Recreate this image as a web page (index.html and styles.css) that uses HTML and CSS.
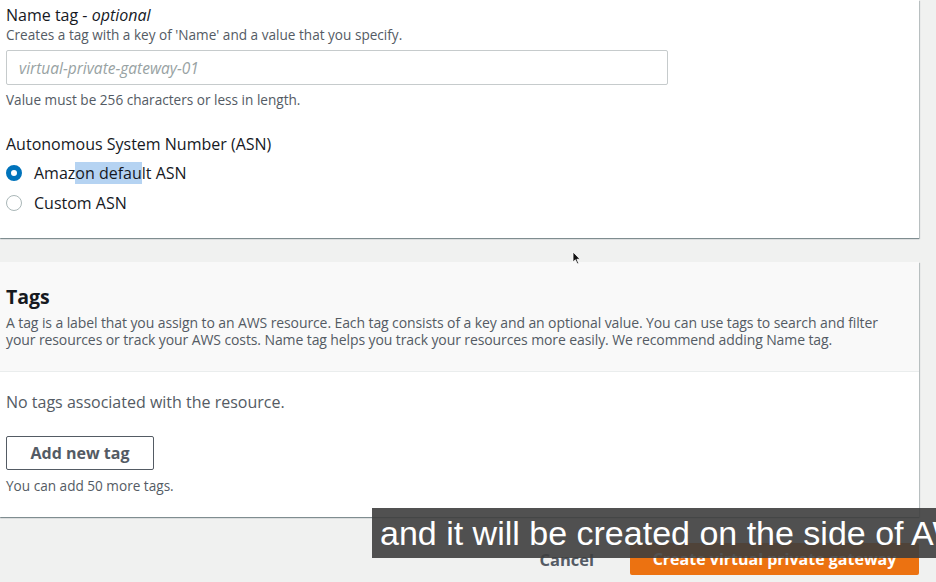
FILE: index.html
```html
<!DOCTYPE html>
<html lang="en">
<head>
<meta charset="utf-8">
<title>Create virtual private gateway</title>
<link rel="stylesheet" href="styles.css">
</head>
<body>
<main class="page">
  <section class="card card-details">
    <div class="field">
      <div class="label">Name tag - <i>optional</i></div>
      <div class="desc">Creates a tag with a key of 'Name' and a value that you specify.</div>
      <input class="text-input" type="text" placeholder="virtual-private-gateway-01">
      <div class="hint">Value must be 256 characters or less in length.</div>
    </div>
    <div class="field field-asn">
      <div class="label">Autonomous System Number (ASN)</div>
      <label class="radio-row">
        <span class="radio checked"></span>
        <span class="radio-text">Amaz<span class="sel">on defau</span>lt ASN</span>
      </label>
      <label class="radio-row">
        <span class="radio"></span>
        <span class="radio-text">Custom ASN</span>
      </label>
    </div>
  </section>

  <section class="card card-tags">
    <header class="tags-header">
      <h2 class="tags-title">Tags</h2>
      <p class="tags-desc">A tag is a label that you assign to an AWS resource. Each tag consists of a key and an optional value. You can use tags to search and filter your resources or track your AWS costs. Name tag helps you track your resources more easily. We recommend adding Name tag.</p>
    </header>
    <div class="tags-body">
      <p class="empty">No tags associated with the resource.</p>
      <button class="btn-normal" type="button">Add new tag</button>
      <div class="hint">You can add 50 more tags.</div>
    </div>
  </section>

  <footer class="actions">
    <button class="btn-link" type="button">Cancel</button>
    <button class="btn-primary" type="button">Create virtual private gateway</button>
  </footer>
</main>

<svg class="cursor" width="9" height="14" viewBox="0 0 9 14">
  <path d="M1 1 L1 11 L3.4 8.8 L5.2 12.8 L6.6 12.2 L4.9 8.3 L8 8.2 Z" fill="#111" stroke="#fff" stroke-width="0.8"/>
</svg>

<div class="subtitle">and it will be created on the side of AWS</div>
</body>
</html>
```

FILE: styles.css
```css
* { box-sizing: border-box; }

html, body {
  margin: 0;
  padding: 0;
}

body {
  width: 936px;
  height: 582px;
  overflow: hidden;
  background: #f0f1f0;
  font-family: "Open Sans", "Noto Sans", Arial, sans-serif;
  color: #16191f;
  position: relative;
}

.page {
  display: flex;
  flex-direction: column;
  padding-right: 17px;
}

.card {
  background: #fff;
  box-shadow: 0 1px 1px 0 rgba(0, 28, 36, .35), 1px 1px 1px 0 rgba(0, 28, 36, .18);
}

.card-details {
  padding: 4px 0 0 6px;
  height: 238px;
}

.label {
  font-size: 16px;
  line-height: 22px;
  color: #16191f;
}

.label i { font-style: italic; }

.desc, .hint {
  font-size: 13.6px;
  line-height: 18px;
  color: #545b64;
}

.text-input {
  display: block;
  margin: 6px 0 6px;
  width: 662px;
  height: 35px;
  border: 1px solid #c6cbcc;
  border-radius: 2px;
  padding: 0 12px;
  font-family: inherit;
  font-size: 15.5px;
  font-style: italic;
  outline: none;
}

.text-input::placeholder {
  color: #98a2a3;
  font-style: italic;
}

.field-asn {
  margin-top: 24px;
}

.field-asn .label { margin-bottom: 3px; }

.radio-row {
  display: flex;
  align-items: center;
  gap: 12px;
  height: 30px;
  font-size: 16px;
}

.radio {
  width: 16px;
  height: 16px;
  border-radius: 50%;
  border: 1.5px solid #aab7b8;
  background: #fff;
  flex: none;
}

.radio.checked {
  border: 5px solid #0073bb;
}

.sel {
  background: #b5d3f2;
}

.card-tags {
  margin-top: 24px;
  display: flex;
  flex-direction: column;
}

.tags-header {
  background: #f9f9f9;
  padding: 22px 0 0 6px;
  height: 110px;
  border-bottom: 1px solid #eaeded;
}

.tags-title {
  margin: 0;
  font-size: 19.5px;
  line-height: 26px;
  font-weight: 700;
  color: #16191f;
}

.tags-desc {
  margin: 4px 0 0;
  max-width: 885px;
  font-size: 14px;
  line-height: 17px;
  color: #545b64;
  letter-spacing: -0.1px;
}

.tags-body {
  padding: 19px 0 22px 6px;
}

.empty {
  margin: 0 0 23px;
  font-size: 16px;
  line-height: 22px;
  color: #545b64;
}

.btn-normal {
  display: block;
  width: 148px;
  height: 34px;
  border: 1px solid #545b64;
  border-radius: 2px;
  background: #fff;
  color: #545b64;
  font-family: inherit;
  font-size: 16px;
  font-weight: 700;
  margin-bottom: 7px;
}

.actions {
  margin-top: 26px;
  display: flex;
  justify-content: flex-end;
  align-items: center;
  gap: 36px;
}

.btn-link {
  border: 0;
  background: transparent;
  font-family: inherit;
  font-size: 16.5px;
  font-weight: 700;
  color: #545b64;
  padding: 0;
}

.btn-primary {
  width: 289px;
  height: 32px;
  border: 0;
  border-radius: 2px;
  background: #ec7211;
  color: #fff;
  font-family: inherit;
  font-size: 16px;
  font-weight: 700;
}

.cursor {
  position: absolute;
  left: 572px;
  top: 251px;
}

.subtitle {
  position: absolute;
  left: 372px;
  top: 508px;
  right: 0;
  height: 50px;
  background: rgba(62, 62, 62, 0.9);
  color: #fff;
  font-family: "Liberation Sans", Arial, sans-serif;
  font-size: 34px;
  line-height: 50px;
  padding-left: 8px;
  white-space: nowrap;
  overflow: hidden;
}
```
